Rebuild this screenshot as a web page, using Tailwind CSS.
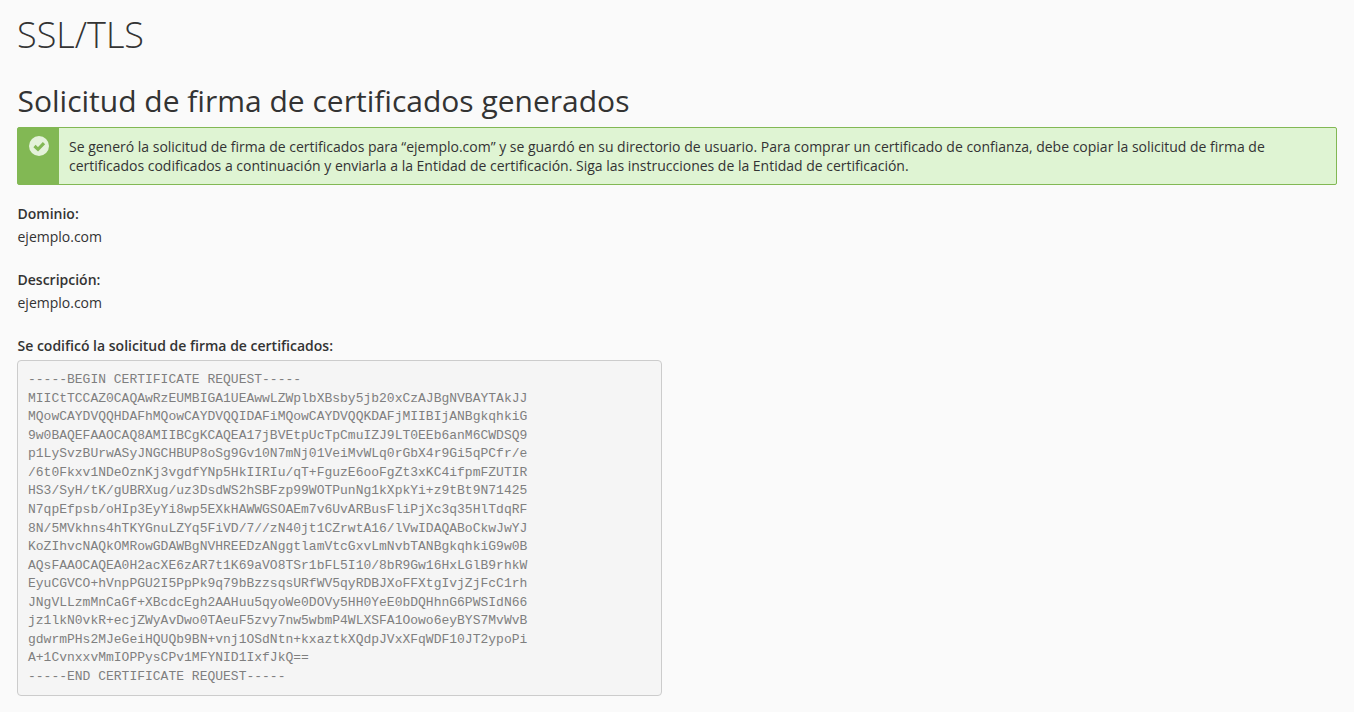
<!DOCTYPE html>
<html lang="es">
<head>
    <meta charset="UTF-8">
    <title>SSL/TLS</title>
    <script src="https://cdn.jsdelivr.net/npm/@tailwindcss/browser@4"></script>
</head>
<body class="bg-[#fafafa] text-[#333] font-['Open_Sans',sans-serif] text-[14px] leading-[20px] overflow-hidden">
    <div class="px-[17px]">
        <h1 class="pt-[13px] text-[36px] leading-[44px] font-light text-[#333]">SSL/TLS</h1>

        <h2 class="mt-[22px] pl-[0.5px] text-[30px] leading-[44px] font-normal text-[#333]">Solicitud de firma de certificados generados</h2>

        <div class="mt-[4px] flex h-[58px] rounded-[2px] border border-[#82b854] bg-[#dff4d3]">
            <div class="flex w-[41px] shrink-0 justify-center bg-[#82b854] pt-[8px]">
                <svg width="20" height="20" viewBox="0 0 20 20">
                    <circle cx="10" cy="10" r="10" fill="#e4f2da"/>
                    <path d="M5.5 10 L9 13.3 L15 7.2" fill="none" stroke="#82b854" stroke-width="3.2"/>
                </svg>
            </div>
            <p class="pl-[10px] pr-[40px] pt-[9px] leading-[19px] tracking-[-0.008px] text-[#333]">Se generó la solicitud de firma de certificados para “ejemplo.com” y se guardó en su directorio de usuario. Para comprar un certificado de confianza, debe copiar la solicitud de firma de certificados codificados a continuación y enviarla a la Entidad de certificación. Siga las instrucciones de la Entidad de certificación.</p>
        </div>

        <div class="mt-[19px] pl-[0.5px]">
            <div class="font-semibold leading-[20px]">Dominio:</div>
            <div class="mt-[3px]">ejemplo.com</div>
        </div>

        <div class="mt-[23px] pl-[0.5px]">
            <div class="font-semibold leading-[20px]">Descripción:</div>
            <div class="mt-[3px]">ejemplo.com</div>
        </div>

        <div class="mt-[23px]">
            <div class="pl-[0.5px] font-semibold leading-[20px]">Se codificó la solicitud de firma de certificados:</div>
            <pre class="mt-[4px] w-[645px] rounded-[4px] border border-[#ccc] bg-[#f5f5f5] px-[10px] pt-[10px] pb-[8px] font-['Liberation_Mono',monospace] text-[13px] leading-[18.57px] text-[#7f7f7f]">-----BEGIN CERTIFICATE REQUEST-----
MIICtTCCAZ0CAQAwRzEUMBIGA1UEAwwLZWplbXBsby5jb20xCzAJBgNVBAYTAkJJ
MQowCAYDVQQHDAFhMQowCAYDVQQIDAFiMQowCAYDVQQKDAFjMIIBIjANBgkqhkiG
9w0BAQEFAAOCAQ8AMIIBCgKCAQEA17jBVEtpUcTpCmuIZJ9LT0EEb6anM6CWDSQ9
p1LySvzBUrwASyJNGCHBUP8oSg9Gv10N7mNj01VeiMvWLq0rGbX4r9Gi5qPCfr/e
/6t0Fkxv1NDeOznKj3vgdfYNp5HkIIRIu/qT+FguzE6ooFgZt3xKC4ifpmFZUTIR
HS3/SyH/tK/gUBRXug/uz3DsdWS2hSBFzp99WOTPunNg1kXpkYi+z9tBt9N71425
N7qpEfpsb/oHIp3EyYi8wp5EXkHAWWGSOAEm7v6UvARBusFliPjXc3q35HlTdqRF
8N/5MVkhns4hTKYGnuLZYq5FiVD/7//zN40jt1CZrwtA16/lVwIDAQABoCkwJwYJ
KoZIhvcNAQkOMRowGDAWBgNVHREEDzANggtlamVtcGxvLmNvbTANBgkqhkiG9w0B
AQsFAAOCAQEA0H2acXE6zAR7t1K69aVO8TSr1bFL5I10/8bR9Gw16HxLGlB9rhkW
EyuCGVCO+hVnpPGU2I5PpPk9q79bBzzsqsURfWV5qyRDBJXoFFXtgIvjZjFcC1rh
JNgVLLzmMnCaGf+XBcdcEgh2AAHuu5qyoWe0DOVy5HH0YeE0bDQHhnG6PWSIdN66
jz1lkN0vkR+ecjZWyAvDwo0TAeuF5zvy7nw5wbmP4WLXSFA1Oowo6eyBYS7MvWvB
gdwrmPHs2MJeGeiHQUQb9BN+vnj1OSdNtn+kxaztkXQdpJVxXFqWDF10JT2ypoPi
A+1CvnxxvMmIOPPysCPv1MFYNID1IxfJkQ==
-----END CERTIFICATE REQUEST-----</pre>
        </div>
    </div>
</body>
</html>
